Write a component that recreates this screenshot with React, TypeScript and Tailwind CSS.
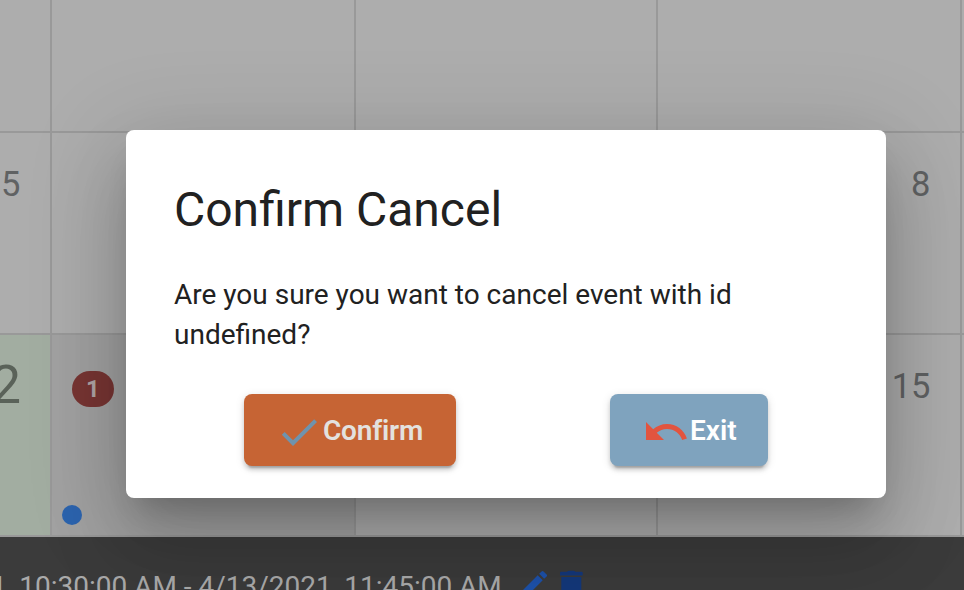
import React from 'react';

type CellProps = { children?: React.ReactNode; className?: string };

function Cell({ children, className = '' }: CellProps) {
  return <div className={`border-r-2 border-b-2 border-[#999999] ${className}`}>{children}</div>;
}

function CheckIcon() {
  return (
    <svg className="mt-[3px] -ml-px mr-px h-12 w-12 shrink-0" viewBox="0 0 24 24" fill="#6f93ad">
      <path d="M9 16.17L4.83 12l-1.42 1.41L9 19 21 7l-1.41-1.41z" />
    </svg>
  );
}

function UndoIcon() {
  return (
    <svg className="mt-1 h-12 w-12 shrink-0" viewBox="0 0 24 24" fill="#e2543f">
      <path d="M12.5 8c-2.65 0-5.05.99-6.9 2.6L2 7v9h9l-3.62-3.62c1.39-1.16 3.16-1.88 5.12-1.88 3.54 0 6.55 2.31 7.6 5.5l2.37-.78C21.08 11.03 17.15 8 12.5 8z" />
    </svg>
  );
}

function Calendar() {
  return (
    <div className="grid w-[1000px] grid-cols-[52px_304px_302px_304px_38px] grid-rows-[133px_202px_202px] bg-[#adadad]">
      <Cell />
      <Cell />
      <Cell />
      <Cell />
      <Cell />
      <Cell className="pt-[31px] pr-[29.5px] text-right text-[34.5px] leading-[40px] text-[#606263]">5</Cell>
      <Cell />
      <Cell />
      <Cell className="pt-[31px] pr-[29.5px] text-right text-[34.5px] leading-[40px] text-[#606263]">8</Cell>
      <Cell />
      <Cell className="flex justify-end bg-[#a2ada1] pt-[18px] pr-[29px] text-[53px] leading-[64px] text-[#5a6259]">12</Cell>
      <Cell className="flex flex-col items-start justify-between bg-[#a2a2a2] pt-9 pb-[10px]">
        <span className="ml-5 flex h-9 w-[42px] items-center justify-center rounded-full bg-[#783533] text-2xl font-bold text-[#b0a6a6]">1</span>
        <span className="ml-[10px] h-5 w-5 rounded-full bg-[#2c64af]" />
      </Cell>
      <Cell />
      <Cell className="pt-[31px] pr-[29.5px] text-right text-[34.5px] leading-[40px] text-[#606263]">15</Cell>
      <Cell />
    </div>
  );
}

function EventRow() {
  return (
    <div className="flex h-[53px] items-start overflow-hidden bg-[#3b3b3b] pt-[30px] text-[28px] leading-[40px] whitespace-nowrap text-[#aaaaaa]">
      <span className="-ml-[9px] w-[511px]">1, 10:30:00 AM - 4/13/2021, 11:45:00 AM</span>
      <svg className="ml-[17px] h-8 w-8 shrink-0" viewBox="0 0 24 24" fill="#1d51a9">
        <path d="M3 17.25V21h3.75L17.81 9.94l-3.75-3.75L3 17.25zM20.71 7.04a.996.996 0 0 0 0-1.41l-2.34-2.34a.996.996 0 0 0-1.41 0l-1.83 1.83 3.75 3.75 1.83-1.83z" />
      </svg>
      <svg className="ml-1 h-8 w-8 shrink-0" viewBox="0 0 32 32" fill="#14387a">
        <path d="M5 6Q5 4.800 6.200 4.800H12Q13 3.800 14 3.800H18.500Q19.500 3.800 20.500 4.800H26.500Q27.700 4.800 27.700 6V8.500H5ZM6.300 10H26.300V28Q26.300 31 23.300 31H9.300Q6.300 31 6.300 28Z" />
      </svg>
    </div>
  );
}

function ConfirmDialog() {
  return (
    <div className="absolute top-[130px] left-[126px] h-[368px] w-[760px] rounded-lg bg-white p-12 text-[#212121] shadow-[0_22px_30px_-14px_rgba(0,0,0,0.2),0_48px_76px_6px_rgba(0,0,0,0.14),0_18px_92px_16px_rgba(0,0,0,0.12)]">
      <h1 className="text-[48px] leading-[64px]">Confirm Cancel</h1>
      <p className="mt-[33px] text-[28px] leading-[40px]">
        Are you sure you want to cancel event with id undefined?
      </p>
      <div className="mt-[39px] flex pl-[70px] text-[28px] font-semibold">
        <button className="flex h-[72px] w-[212px] items-center rounded-lg bg-[#c66434] pl-8 text-[#e3e1df] shadow-[0_6px_2px_-4px_rgba(0,0,0,0.2),0_4px_4px_0_rgba(0,0,0,0.14),0_2px_10px_0_rgba(0,0,0,0.12)]">
          <CheckIcon />
          <span className="-ml-px pt-0.5 tracking-[-0.2px]">Confirm</span>
        </button>
        <button className="ml-[154px] flex h-[72px] w-[158px] items-center rounded-lg bg-[#7fa3be] pl-8 text-white shadow-[0_6px_2px_-4px_rgba(0,0,0,0.2),0_4px_4px_0_rgba(0,0,0,0.14),0_2px_10px_0_rgba(0,0,0,0.12)]">
          <UndoIcon />
          <span className="pt-0.5">Exit</span>
        </button>
      </div>
    </div>
  );
}

export default function App() {
  return (
    <main className="relative h-[590px] w-[964px] overflow-hidden font-[Roboto,sans-serif]">
      <Calendar />
      <EventRow />
      <ConfirmDialog />
    </main>
  );
}
